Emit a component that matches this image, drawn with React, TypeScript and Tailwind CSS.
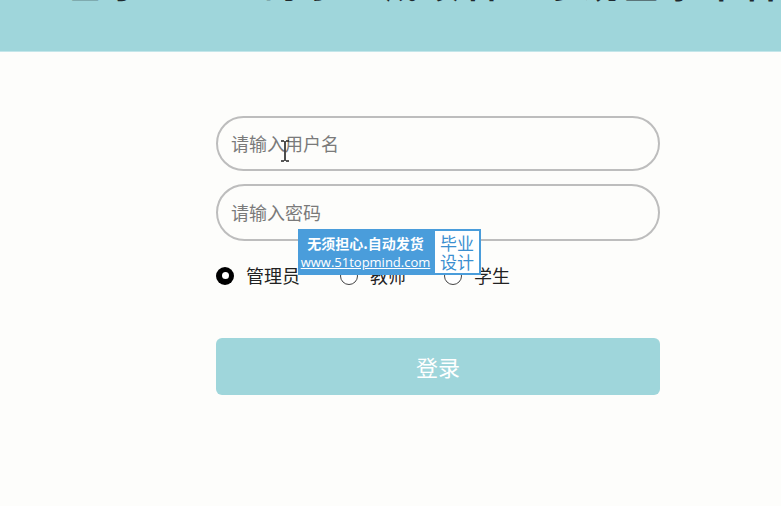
import React, { useState } from 'react';

const roles = ['管理员', '教师', '学生'];

export default function App() {
  const [role, setRole] = useState('管理员');

  return (
    <div
      className="w-[781px] h-[506px] bg-[#fdfdfb] overflow-hidden relative"
      style={{ fontFamily: '"Noto Sans CJK SC", "Noto Sans", sans-serif' }}
    >
      {/* Header, page scrolled so the title is mostly cut off */}
      <div className="h-[52px] bg-[#9fd6db] border-b border-[#c4e6ea] overflow-hidden">
        <h1 className="mt-[-37px] pl-[68px] text-[34px] leading-[42px] font-bold text-[#1f2a2e] whitespace-nowrap tracking-[6px]">
          基于 SSM 的学生成绩管理系统登录平台设计与实现
        </h1>
      </div>

      {/* Login form */}
      <div className="pl-[216px] pt-[64px] w-[660px] flex flex-col">
        <div className="relative h-[55px] rounded-full border-2 border-[#bdbdbd] flex items-center px-[13px]">
          <span className="text-[18px] text-[#7a7a7a]">请输入用户名</span>
          {/* text cursor */}
          <svg className="absolute left-[62px] top-[22px]" width="10" height="22" viewBox="0 0 10 22">
            <path d="M1 1h3M6 1h3M5 1v20M1 21h3M6 21h3" stroke="#222" strokeWidth="1.6" fill="none" />
          </svg>
        </div>
        <div className="mt-[13px] h-[57px] rounded-full border-2 border-[#bdbdbd] flex items-center px-[13px]">
          <span className="text-[18px] text-[#7a7a7a]">请输入密码</span>
        </div>

        <div className="mt-[21px] flex items-center">
          {roles.map((r, i) => (
            <label
              key={r}
              onClick={() => setRole(r)}
              className={`flex items-center gap-[12px] cursor-pointer ${i === 0 ? 'w-[124px]' : 'w-[104px]'}`}
            >
              {role === r ? (
                <span className="w-[18px] h-[18px] rounded-full bg-black flex items-center justify-center">
                  <span className="w-[7px] h-[7px] rounded-full bg-white" />
                </span>
              ) : (
                <span className="w-[18px] h-[18px] rounded-full border border-[#444] bg-white" />
              )}
              <span className="text-[18px] text-[#222]">{r}</span>
            </label>
          ))}
        </div>

        <button className="mt-[49px] h-[57px] rounded-md bg-[#9fd6db] text-white text-[22px]">
          登录
        </button>
      </div>

      {/* Watermark badge */}
      <div className="absolute left-[298px] top-[229px] flex">
        <div className="bg-[#4a9ddb] w-[135px] h-[46px] flex flex-col items-center justify-center">
          <span className="text-white text-[14px] leading-[20px] font-bold">无须担心.自动发货</span>
          <span className="text-white text-[13px] leading-[18px] underline" style={{ fontFamily: '"Open Sans", sans-serif' }}>
            www.51topmind.com
          </span>
        </div>
        <div className="w-[48px] h-[46px] bg-white border-2 border-[#4a9ddb] flex flex-col items-center justify-center text-[#3b8fd0] text-[17px] leading-[19px]">
          <span>毕业</span>
          <span>设计</span>
        </div>
      </div>
    </div>
  );
}
